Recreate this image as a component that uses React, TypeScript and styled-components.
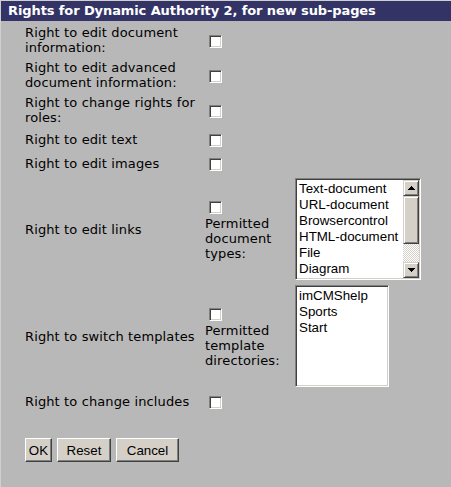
import React from 'react';
import styled, { createGlobalStyle } from 'styled-components';

const Global = createGlobalStyle`
  html, body { margin: 0; padding: 0; background: #b8b8b8; }
`;

const Page = styled.div`
  box-sizing: border-box;
  width: 451px;
  height: 487px;
  background: #b8b8b8;
  border-top: 1px solid #d0d0d0;
  border-left: 1px solid #d0d0d0;
  font-family: "DejaVu Sans", Verdana, sans-serif;
  font-size: 13px;
  line-height: 15px;
  letter-spacing: 0.12px;
  color: #000;
  overflow: hidden;
`;

const Header = styled.div`
  height: 20px;
  background: #333366;
  color: #fff;
  font-weight: bold;
  line-height: 20px;
  letter-spacing: -0.1px;
  padding-left: 7px;
  white-space: nowrap;
`;

const Form = styled.div`
  display: grid;
  grid-template-columns: 178px 1fr;
  column-gap: 2px;
  row-gap: 1px;
  padding: 2px 0 0 24px;
`;

const Cell = styled.div`
  padding: 2px 0;
  display: flex;
  align-items: center;
`;

const Check = styled.input.attrs({ type: 'checkbox' })`
  appearance: none;
  -webkit-appearance: none;
  box-sizing: border-box;
  width: 13px;
  height: 13px;
  margin: 4px 3px 2px 4px;
  background: #fff;
  border: 1px solid;
  border-color: #808080 #fff #fff #808080;
  box-shadow: inset 1px 1px 0 #404040, inset -1px -1px 0 #d4d0c8;
  flex: none;
`;

const PermitBlock = styled.div`
  width: 90px;
  flex: none;
  display: flex;
  flex-direction: column;
  align-items: flex-start;
`;

const ListBox = styled.div<{ $w: number }>`
  box-sizing: border-box;
  width: ${(p) => p.$w}px;
  height: 102px;
  flex: none;
  background: #fff;
  border: 1px solid;
  border-color: #808080 #fff #fff #808080;
  box-shadow: inset 1px 1px 0 #404040, inset -1px -1px 0 #d4d0c8;
  padding: 1px;
  display: flex;
  font-family: "Liberation Sans", Arial, sans-serif;
  font-size: 13.33px;
  line-height: 16px;
  letter-spacing: 0;
`;

const Items = styled.div`
  flex: 1;
  min-width: 0;
  overflow: hidden;
  padding: 1px 0 0 2px;
  white-space: nowrap;
`;

const ScrollBar = styled.div`
  width: 16px;
  flex: none;
  display: flex;
  flex-direction: column;
`;

const ScrollBtn = styled.div<{ $h?: number }>`
  box-sizing: border-box;
  height: ${(p) => p.$h ?? 16}px;
  flex: none;
  background: #d4d0c8;
  border: 1px solid;
  border-color: #d4d0c8 #404040 #404040 #d4d0c8;
  box-shadow: inset 1px 1px 0 #fff, inset -1px -1px 0 #808080;
  display: flex;
  align-items: center;
  justify-content: center;
`;

const Track = styled.div`
  flex: 1;
  background: repeating-conic-gradient(#d4d0c8 0 25%, #fff 0 50%) 0 0 / 2px 2px;
`;

const ButtonRow = styled.div`
  display: flex;
  gap: 5px;
  padding: 25px 0 0 24px;
`;

const Btn = styled.button<{ $w: number }>`
  box-sizing: border-box;
  width: ${(p) => p.$w}px;
  height: 24px;
  padding: 0;
  background: #d4d0c8;
  border: 1px solid;
  border-color: #fff #404040 #404040 #fff;
  box-shadow: inset -1px -1px 0 #808080, inset 1px 1px 0 #d4d0c8;
  font-family: "Liberation Sans", Arial, sans-serif;
  font-size: 13.33px;
  color: #000;
`;

const Arrow = ({ down }: { down?: boolean }) => (
  <svg width="7" height="4" viewBox="0 0 7 4" shapeRendering="crispEdges" style={down ? { transform: 'scaleY(-1)' } : undefined}>
    <path d="M3 0h1v1h-1z M2 1h3v1h-3z M1 2h5v1h-5z M0 3h7v1h-7z" fill="#000" />
  </svg>
);

const simpleRows = [
  'Right to edit document information:',
  'Right to edit advanced document information:',
  'Right to change rights for roles:',
  'Right to edit text',
  'Right to edit images',
];

const docTypes = ['Text-document', 'URL-document', 'Browsercontrol', 'HTML-document', 'File', 'Diagram'];
const templates = ['imCMShelp', 'Sports', 'Start'];

export default function App() {
  return (
    <>
      <Global />
      <Page>
        <Header>Rights for Dynamic Authority 2, for new sub-pages</Header>
        <Form>
          {simpleRows.map((t) => (
            <React.Fragment key={t}>
              <Cell>{t}</Cell>
              <Cell>
                <Check />
              </Cell>
            </React.Fragment>
          ))}
          <Cell>Right to edit links</Cell>
          <Cell>
            <PermitBlock>
              <Check />
              <div>Permitted document types:</div>
            </PermitBlock>
            <ListBox $w={126}>
              <Items>
                {docTypes.map((d) => (
                  <div key={d}>{d}</div>
                ))}
              </Items>
              <ScrollBar>
                <ScrollBtn>
                  <Arrow />
                </ScrollBtn>
                <ScrollBtn $h={48} />
                <Track />
                <ScrollBtn>
                  <Arrow down />
                </ScrollBtn>
              </ScrollBar>
            </ListBox>
          </Cell>
          <Cell>Right to switch templates</Cell>
          <Cell>
            <PermitBlock>
              <Check />
              <div>Permitted template directories:</div>
            </PermitBlock>
            <ListBox $w={94}>
              <Items>
                {templates.map((d) => (
                  <div key={d}>{d}</div>
                ))}
              </Items>
            </ListBox>
          </Cell>
          <Cell>Right to change includes</Cell>
          <Cell>
            <Check />
          </Cell>
        </Form>
        <ButtonRow>
          <Btn $w={27}>OK</Btn>
          <Btn $w={54}>Reset</Btn>
          <Btn $w={63}>Cancel</Btn>
        </ButtonRow>
      </Page>
    </>
  );
}
